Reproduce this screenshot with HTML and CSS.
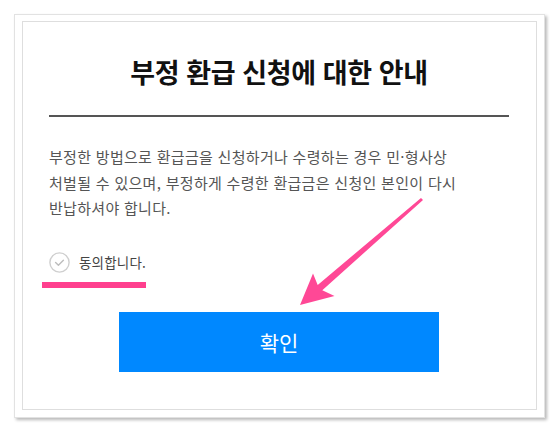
FILE: index.html
```html
<!DOCTYPE html>
<html lang="ko">
<head>
<meta charset="utf-8">
<title>부정 환급 신청에 대한 안내</title>
<link rel="stylesheet" href="styles.css">
</head>
<body>
<div class="card">
  <div class="inner">
    <h1 class="title">부정 환급 신청에 대한 안내</h1>
    <hr class="divider">
    <p class="desc">부정한 방법으로 환급금을 신청하거나 수령하는 경우 민·형사상<br>처벌될 수 있으며, 부정하게 수령한 환급금은 신청인 본인이 다시<br>반납하셔야 합니다.</p>
    <label class="agree">
      <svg class="check" width="21" height="21" viewBox="0 0 21 21">
        <circle cx="10.5" cy="10.5" r="9.6" fill="#fff" stroke="#cfcfcf" stroke-width="1.4"/>
        <path d="M6.6 10.6 L9.4 13.3 L14.4 8.2" fill="none" stroke="#bdbdbd" stroke-width="1.4" stroke-linecap="round" stroke-linejoin="round"/>
      </svg>
      <span class="agree-text">동의합니다.</span>
    </label>
    <button class="confirm">확인</button>
  </div>
</div>
<svg class="annot" width="560" height="434" viewBox="0 0 560 434">
  <rect x="42" y="282" width="104" height="6" fill="#ff3f8e"/>
  <polygon points="421,197.9 317.7,285 313,273.5 300,305 334.5,296 322.3,290.2 423,200.1" fill="#ff4896"/>
</svg>
</body>
</html>
```

FILE: styles.css
```css
html, body {
  margin: 0;
  padding: 0;
  background: #fff;
}
body {
  padding: 14px;
  font-family: "Noto Sans CJK KR", "Noto Sans", sans-serif;
  position: relative;
  width: 560px;
  height: 434px;
  box-sizing: border-box;
}
.card {
  width: 531px;
  box-sizing: border-box;
  border: 1px solid #e2e2e2;
  padding: 6px 7px 7px 7px;
  box-shadow: 2px 2px 3px rgba(0, 0, 0, 0.28);
  background: #fff;
}
.inner {
  border: 1px solid #dedede;
  padding: 34px 27px 37px 26px;
  display: flex;
  flex-direction: column;
}
.title {
  margin: 0;
  text-align: center;
  font-size: 27px;
  line-height: 32px;
  font-weight: 700;
  letter-spacing: -0.4px;
  color: #111;
}
.divider {
  margin: 27px 0 0 0;
  border: 0;
  height: 2px;
  background: #555;
}
.desc {
  margin: 27px 0 0 0;
  font-size: 15px;
  line-height: 25.5px;
  color: #555;
  letter-spacing: 0.3px;
  white-space: nowrap;
}
.agree {
  margin-top: 31px;
  display: flex;
  align-items: center;
  gap: 9px;
  height: 21px;
}
.check {
  display: block;
  flex: none;
}
.agree-text {
  font-size: 13.5px;
  color: #444;
  letter-spacing: 0.2px;
  line-height: 21px;
}
.confirm {
  margin: 39px auto 0 auto;
  width: 320px;
  height: 60px;
  border: 0;
  background: #0088ff;
  color: #fff;
  font-family: "Noto Sans CJK KR", "Noto Sans", sans-serif;
  font-size: 21px;
  font-weight: 400;
  padding: 0;
}
.annot {
  position: absolute;
  left: 0;
  top: 0;
  pointer-events: none;
}
```
